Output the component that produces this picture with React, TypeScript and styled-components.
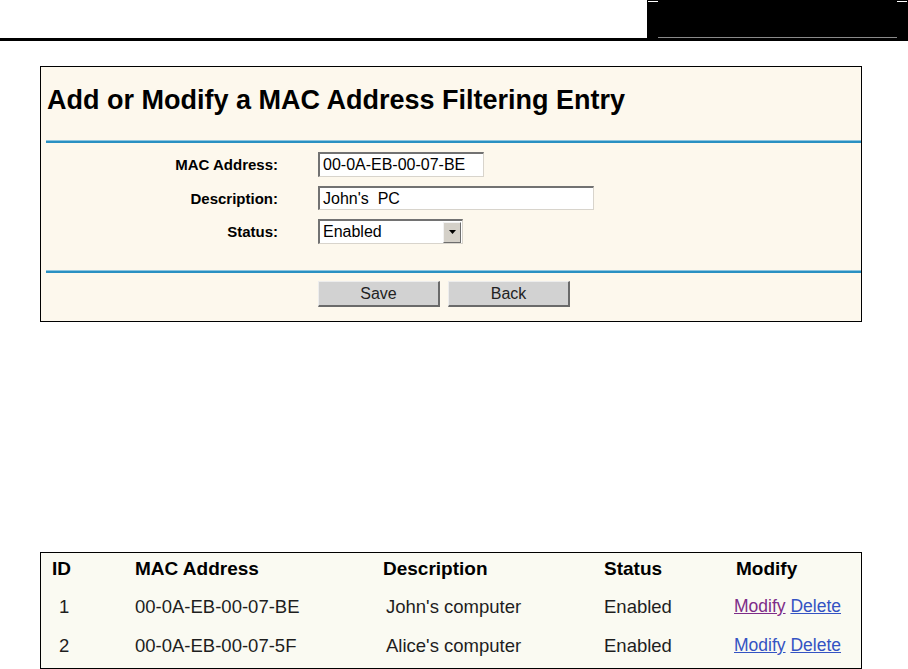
import React from "react";
import styled, { createGlobalStyle } from "styled-components";

const GlobalStyle = createGlobalStyle`
  html, body { margin: 0; padding: 0; background: #ffffff; }
  body { font-family: "Liberation Sans", Arial, sans-serif; color: #000; }
  * { box-sizing: border-box; }
`;

const Page = styled.div`
  width: 908px;
  height: 669px;
  overflow: hidden;
  display: flex;
  flex-direction: column;
`;

const TopBar = styled.div`
  height: 38px;
  display: flex;
  justify-content: flex-end;
`;

const BlackTab = styled.div`
  position: relative;
  width: 261px;
  height: 38px;
  background: #000;
  &::before {
    content: "";
    position: absolute;
    top: 1px;
    left: 1px;
    width: 10px;
    height: 1px;
    background: #fff;
    box-shadow: 249px 0 0 #fff;
  }
  &::after {
    content: "";
    position: absolute;
    left: 11px;
    right: 11px;
    bottom: 0;
    height: 1px;
    background: #8a8a8a;
  }
`;

const Rule = styled.div`
  height: 3px;
  background: #000;
`;

const Card = styled.section`
  margin: 25px 0 0 40px;
  width: 822px;
  height: 256px;
  border: 1px solid #000;
  background: #fdf8ed;
  display: flex;
  flex-direction: column;
`;

const TitleBar = styled.div`
  height: 73px;
  padding: 18px 0 0 6px;
`;

const Title = styled.h1`
  margin: 0;
  font-size: 27px;
  line-height: 30px;
  font-weight: bold;
  color: #000;
  white-space: nowrap;
`;

const Divider = styled.div`
  margin-left: 5px;
  height: 3px;
  background: linear-gradient(#8ec6df 0 1px, #2a90c2 1px 100%);
`;

const Form = styled.div`
  height: 127px;
  padding-top: 9px;
  display: flex;
  flex-direction: column;
  gap: 9px;
`;

const FormRow = styled.div<{ $h: number }>`
  display: grid;
  grid-template-columns: 237px 166px 1fr;
  column-gap: 40px;
  height: ${(p) => p.$h}px;
  align-items: center;
`;

const Label = styled.div`
  text-align: right;
  font-size: 15px;
  font-weight: bold;
  color: #000;
  white-space: nowrap;
`;

const InsetBox = styled.div<{ $w: number }>`
  width: ${(p) => p.$w}px;
  height: 100%;
  background: #fff;
  border-top: 2px solid #727272;
  border-left: 2px solid #727272;
  border-right: 1px solid #d8d4cc;
  border-bottom: 1px solid #d8d4cc;
  display: flex;
  align-items: center;
  font-size: 16px;
  color: #000;
  white-space: pre;
`;

const FieldText = styled.span`
  flex: 1;
  padding-left: 3px;
`;

const ArrowButton = styled.div`
  width: 18px;
  height: 21px;
  margin-right: 1px;
  background: #d4d0c8;
  border-top: 1px solid #f2f2f2;
  border-left: 1px solid #f2f2f2;
  border-right: 1px solid #6d6d6d;
  border-bottom: 1px solid #6d6d6d;
  display: flex;
  align-items: center;
  justify-content: center;
`;

const Buttons = styled.div`
  flex: 1;
  padding: 8px 0 0 277px;
  display: flex;
  gap: 8px;
`;

const Button = styled.button`
  width: 122px;
  height: 26px;
  padding: 0;
  background: #d2d2d2;
  border-top: 1px solid #ededed;
  border-left: 1px solid #ededed;
  border-right: 2px solid #6a6a6a;
  border-bottom: 2px solid #6a6a6a;
  font-family: "Liberation Sans", Arial, sans-serif;
  font-size: 16px;
  color: #222;
`;

const TableBox = styled.section`
  margin: 230px 0 0 40px;
  width: 822px;
  height: 117px;
  border: 1px solid #000;
  background: #fafaf2;
  padding: 5px 0 0 11px;
  display: flex;
  flex-direction: column;
`;

const TRow = styled.div<{ $head?: boolean }>`
  display: grid;
  grid-template-columns: 83px 248px 221px 132px 1fr;
  height: ${(p) => (p.$head ? 22 : 39)}px;
  line-height: ${(p) => (p.$head ? 22 : 39)}px;
  margin-bottom: ${(p) => (p.$head ? 7 : 0)}px;
  font-size: ${(p) => (p.$head ? 19 : 18.5)}px;
  font-weight: ${(p) => (p.$head ? "bold" : "normal")};
  color: ${(p) => (p.$head ? "#000" : "#1e1e1e")};
  white-space: nowrap;
`;

const Cell = styled.div<{ $pad?: number }>`
  padding-left: ${(p) => p.$pad ?? 0}px;
`;

const LinkCell = styled.div`
  margin-left: -2px;
  font-size: 17.5px;
`;

const Link = styled.a<{ $visited?: boolean }>`
  color: ${(p) => (p.$visited ? "#7d2c88" : "#3453c3")};
  text-decoration: underline;
  cursor: pointer;
`;

const entries = [
  { id: 1, mac: "00-0A-EB-00-07-BE", desc: "John's computer", status: "Enabled", visited: true },
  { id: 2, mac: "00-0A-EB-00-07-5F", desc: "Alice's computer", status: "Enabled", visited: false },
];

export default function App() {
  return (
    <>
      <GlobalStyle />
      <Page>
        <TopBar>
          <BlackTab />
        </TopBar>
        <Rule />
        <Card>
          <TitleBar>
            <Title>Add or Modify a MAC Address Filtering Entry</Title>
          </TitleBar>
          <Divider />
          <Form>
            <FormRow $h={25}>
              <Label>MAC Address:</Label>
              <InsetBox $w={166}>
                <FieldText>00-0A-EB-00-07-BE</FieldText>
              </InsetBox>
            </FormRow>
            <FormRow $h={24}>
              <Label>Description:</Label>
              <InsetBox $w={276}>
                <FieldText>John's  PC</FieldText>
              </InsetBox>
            </FormRow>
            <FormRow $h={25}>
              <Label>Status:</Label>
              <InsetBox $w={145}>
                <FieldText>Enabled</FieldText>
                <ArrowButton>
                  <svg width="7" height="4" viewBox="0 0 7 4">
                    <path d="M0 0 H7 L3.5 4 Z" fill="#000" />
                  </svg>
                </ArrowButton>
              </InsetBox>
            </FormRow>
          </Form>
          <Divider />
          <Buttons>
            <Button>Save</Button>
            <Button>Back</Button>
          </Buttons>
        </Card>
        <TableBox>
          <TRow $head>
            <Cell>ID</Cell>
            <Cell>MAC Address</Cell>
            <Cell>Description</Cell>
            <Cell>Status</Cell>
            <Cell>Modify</Cell>
          </TRow>
          {entries.map((e) => (
            <TRow key={e.id}>
              <Cell $pad={7}>{e.id}</Cell>
              <Cell>{e.mac}</Cell>
              <Cell $pad={3}>{e.desc}</Cell>
              <Cell>{e.status}</Cell>
              <LinkCell>
                <Link $visited={e.visited}>Modify</Link> <Link>Delete</Link>
              </LinkCell>
            </TRow>
          ))}
        </TableBox>
      </Page>
    </>
  );
}
